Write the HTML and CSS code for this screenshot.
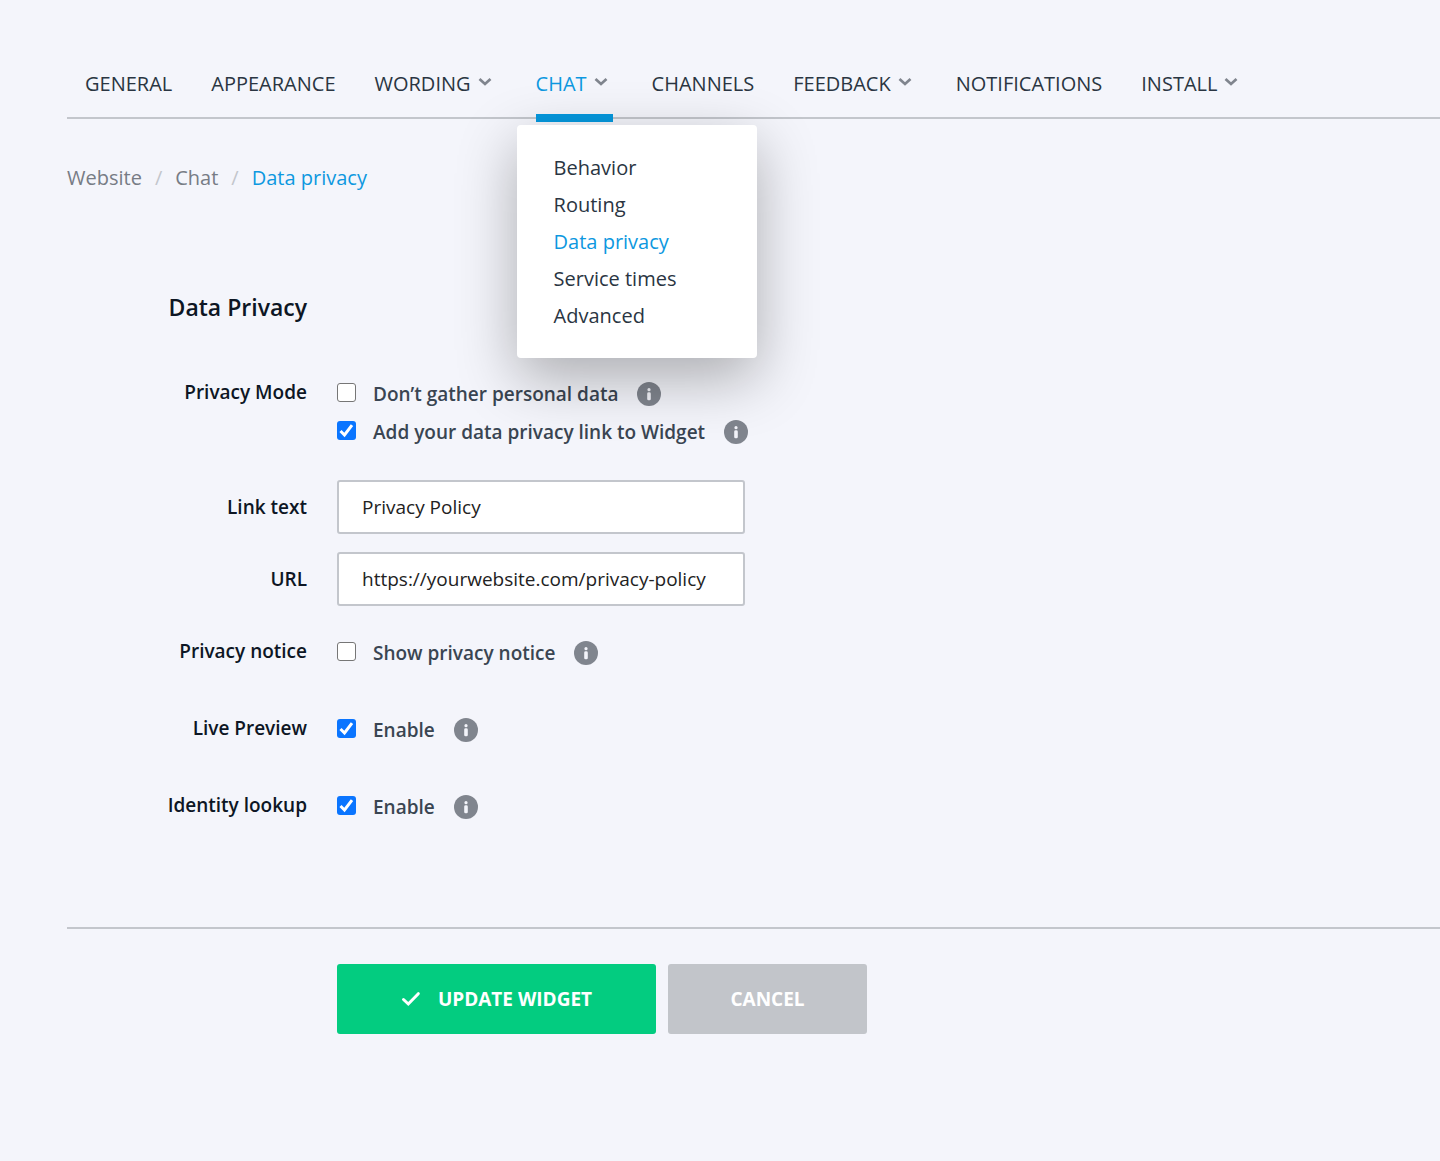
FILE: index.html
```html
<!DOCTYPE html>
<html lang="en">
<head>
<meta charset="utf-8">
<meta name="viewport" content="width=device-width, initial-scale=1">
<title>Data privacy</title>
<link rel="stylesheet" href="styles.css">
</head>
<body>
<svg width="0" height="0" class="sprite" aria-hidden="true">
  <symbol id="chevron" viewBox="0 0 14 10"><path d="M1.5 2 7 7 12.5 2" fill="none" stroke="currentColor" stroke-width="2.7"/></symbol>
  <symbol id="info" viewBox="0 0 24 24"><circle cx="12" cy="12" r="12" fill="#80858e"/><circle cx="12" cy="7.7" r="1.6" fill="#f3f4fa"/><rect x="10.2" y="10.3" width="3.6" height="8" rx="1.4" fill="#f3f4fa"/></symbol>
</svg>
<div class="page">
  <nav class="tabs" aria-label="Settings">
    <a class="tab" href="#">GENERAL</a>
    <a class="tab" href="#">APPEARANCE</a>
    <a class="tab has-menu" href="#">WORDING <svg class="chevron"><use href="#chevron"/></svg></a>
    <div class="tab-group">
      <a class="tab has-menu active" href="#">CHAT <svg class="chevron"><use href="#chevron"/></svg></a>
      <div class="menu">
        <a href="#">Behavior</a>
        <a href="#">Routing</a>
        <a class="current" href="#">Data privacy</a>
        <a href="#">Service times</a>
        <a href="#">Advanced</a>
      </div>
    </div>
    <a class="tab" href="#">CHANNELS</a>
    <a class="tab has-menu" href="#">FEEDBACK <svg class="chevron"><use href="#chevron"/></svg></a>
    <a class="tab" href="#">NOTIFICATIONS</a>
    <a class="tab has-menu" href="#">INSTALL <svg class="chevron"><use href="#chevron"/></svg></a>
  </nav>

  <nav class="crumbs" aria-label="Breadcrumb">
    <a href="#">Website</a><span>/</span><a href="#">Chat</a><span>/</span><a class="current" href="#">Data privacy</a>
  </nav>

  <form class="form">
    <h1 class="title">Data Privacy</h1>
    <div class="row" role="group" aria-labelledby="mode">
      <span class="name" id="mode">Privacy Mode</span>
      <div>
        <div class="option"><label><input type="checkbox">Don’t gather personal data</label><svg class="info"><use href="#info"/></svg></div>
        <div class="option"><label><input type="checkbox" checked>Add your data privacy link to Widget</label><svg class="info"><use href="#info"/></svg></div>
      </div>
    </div>
    <div class="row fields">
      <label class="name" for="link-text">Link text</label>
      <input class="text" id="link-text" type="text" value="Privacy Policy">
      <label class="name" for="url">URL</label>
      <input class="text" id="url" type="text" value="https://yourwebsite.com/privacy-policy">
    </div>
    <div class="row" role="group" aria-labelledby="notice">
      <span class="name" id="notice">Privacy notice</span>
      <div class="option"><label><input type="checkbox">Show privacy notice</label><svg class="info"><use href="#info"/></svg></div>
    </div>
    <div class="row spaced" role="group" aria-labelledby="preview">
      <span class="name" id="preview">Live Preview</span>
      <div class="option"><label><input type="checkbox" checked>Enable</label><svg class="info"><use href="#info"/></svg></div>
    </div>
    <div class="row spaced" role="group" aria-labelledby="lookup">
      <span class="name" id="lookup">Identity lookup</span>
      <div class="option"><label><input type="checkbox" checked>Enable</label><svg class="info"><use href="#info"/></svg></div>
    </div>
    <div class="actions">
      <button class="button update" type="button"><svg class="check" viewBox="0 0 20 16"><path d="M2.5 8.5 7.3 13 17.3 2.7" fill="none" stroke="currentColor" stroke-width="3" stroke-linecap="round"/></svg>UPDATE WIDGET</button>
      <button class="button cancel" type="button">CANCEL</button>
    </div>
  </form>
</div>
</body>
</html>
```
FILE: styles.css
```css
* { box-sizing: border-box; }
body {
  margin: 0;
  background: #f4f5fb;
  color: #0d1624;
  font: 400 20px/26px "Open Sans", sans-serif;
}
a { color: inherit; text-decoration: none; }
.sprite { position: absolute; }
.page { padding: 50px 0 100px 67px; }

.tabs {
  display: flex;
  gap: 39px;
  padding-left: 18px;
  border-bottom: 2px solid #c3c6cc;
  color: #2a3542;
}
.tab { display: block; line-height: 67px; white-space: nowrap; }
.has-menu { display: flex; gap: 7px; padding-right: 5px; }
.tab-group { position: relative; }
.active { color: #0d98e0; }
.active::after {
  content: "";
  position: absolute;
  left: 0;
  right: 0;
  bottom: -5px;
  height: 8px;
  background: #0598de;
}
.chevron { width: 14px; height: 10px; margin-top: 27px; color: #80858e; }
.menu {
  position: absolute;
  top: 75px;
  left: -19px;
  width: 240px;
  padding: 24px 37px 24px;
  border-radius: 4px;
  background: #fff;
  box-shadow: 0 20px 60px rgba(0, 0, 0, 0.3);
}
.menu a { display: block; line-height: 37px; }
.menu .current, .crumbs .current { color: #0d98e0; }

.crumbs { display: flex; gap: 13px; margin-top: 46px; color: #777c85; }
.crumbs span { color: #c3c6cc; }

.form { margin-top: 100px; }
.title {
  width: 240px;
  margin: 0 0 52px;
  font-size: 23px;
  font-weight: 600;
  line-height: 32px;
  text-align: right;
}
.row {
  display: grid;
  grid-template-columns: 240px 1fr;
  column-gap: 30px;
  font-size: 19px;
  font-weight: 600;
}
.fields { row-gap: 18px; margin: 29px 0 28px; }
.spaced { margin-top: 39px; }
.name { line-height: 34px; text-align: right; }
.fields .name { line-height: 54px; }
.option, .option label { display: flex; align-items: center; }
.option { height: 38px; gap: 19px; color: #3a4552; }
.option input {
  appearance: none;
  width: 19px;
  height: 19px;
  margin: 0 17px 3px 0;
  border: 1px solid #767676;
  border-radius: 3px;
  background: #fff;
}
.option input:checked {
  border: 0;
  background: #0a75ff url('data:image/svg+xml,<svg xmlns="http://www.w3.org/2000/svg" viewBox="0 0 19 19"><path d="M3.5 10 7.5 14 15 4.2" fill="none" stroke="white" stroke-width="3"/></svg>') center / 19px 19px;
}
.info { width: 24px; height: 24px; }
.text {
  width: 408px;
  height: 54px;
  padding: 0 23px;
  border: 2px solid #c3c6cc;
  border-radius: 3px;
  background: #fff;
  color: #222;
  font: 400 19px/26px "Open Sans", sans-serif;
}

.actions {
  display: flex;
  gap: 12px;
  margin-top: 101px;
  padding: 35px 0 0 270px;
  border-top: 2px solid #c3c6cc;
}
.button {
  display: flex;
  align-items: center;
  justify-content: center;
  gap: 17px;
  height: 70px;
  border: 0;
  border-radius: 3px;
  color: #fff;
  font: 700 19px/26px "Open Sans", sans-serif;
}
.update { width: 319px; background: #03cc80; }
.cancel { width: 199px; background: #c2c5ca; }
.check { width: 20px; height: 16px; }
```
